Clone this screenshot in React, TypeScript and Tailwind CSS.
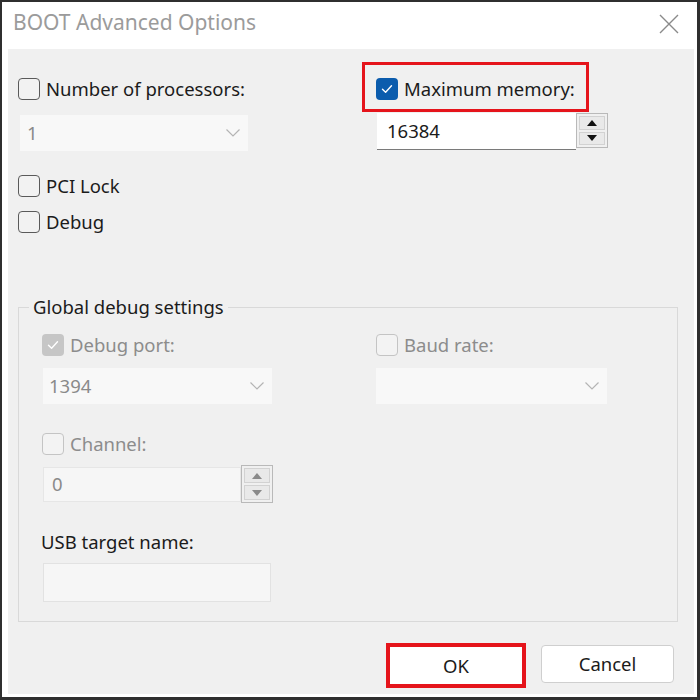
import React from 'react'

const font = { fontFamily: '"Noto Sans", "Open Sans", sans-serif' }

function Check({ checked = false, disabled = false }: { checked?: boolean; disabled?: boolean }) {
  if (checked) {
    return (
      <span
        className={
          'flex h-[22px] w-[22px] shrink-0 items-center justify-center rounded-[4px] ' +
          (disabled ? 'bg-[#c6c6c6]' : 'bg-[#0b5cad]')
        }
      >
        <svg width="14" height="14" viewBox="0 0 14 14" fill="none">
          <path d="M2.5 7.2 L5.6 10.2 L11.5 3.8" stroke="#fff" strokeWidth="1.4" strokeLinecap="round" strokeLinejoin="round" />
        </svg>
      </span>
    )
  }
  return (
    <span
      className={
        'block h-[22px] w-[22px] shrink-0 rounded-[4px] border-[1.5px] ' +
        (disabled ? 'border-[#c4c4c4] bg-[#f3f3f3]' : 'border-[#5a5a5a] bg-[#f2f2f2]')
      }
    />
  )
}

function CheckRow({ label, checked, disabled }: { label: string; checked?: boolean; disabled?: boolean }) {
  return (
    <div className="flex h-[22px] items-center gap-[6px]">
      <Check checked={checked} disabled={disabled} />
      <span className={'text-[18.5px] leading-none ' + (disabled ? 'text-[#8c8c8c]' : 'text-[#1b1b1b]')}>{label}</span>
    </div>
  )
}

function Chevron() {
  return (
    <svg width="16" height="10" viewBox="0 0 16 10" fill="none">
      <path d="M1.5 1.5 L8 8 L14.5 1.5" stroke="#b4b4b4" strokeWidth="1.2" />
    </svg>
  )
}

function Tri({ up, color }: { up?: boolean; color: string }) {
  return (
    <svg width="10" height="6" viewBox="0 0 10 6">
      <path d={up ? 'M0 6 L5 0 L10 6 Z' : 'M0 0 L10 0 L5 6 Z'} fill={color} />
    </svg>
  )
}

function Spinner({ disabled }: { disabled?: boolean }) {
  const c = disabled ? '#8a8a8a' : '#111'
  return (
    <div className="flex h-full w-[32px] flex-col gap-[2px] border border-[#b9b9b9] bg-[#f0f0f0] p-[2px]">
      <div className="flex flex-1 items-center justify-center border border-[#d2d2d2] bg-[#e9e9e9]">
        <Tri up color={c} />
      </div>
      <div className="flex flex-1 items-center justify-center border border-[#d2d2d2] bg-[#e9e9e9]">
        <Tri color={c} />
      </div>
    </div>
  )
}

export default function App() {
  return (
    <div style={font} className="h-[700px] w-[700px] border-2 border-r-[3px] border-b-[3px] border-[#2f2f2f] bg-white">
      {/* title bar */}
      <div className="flex h-[47px] items-center justify-between pb-[6px] pl-[11px] pr-[18px]">
        <span className="text-[21px] text-[#9b9b9b]">BOOT Advanced Options</span>
        <svg width="20" height="20" viewBox="0 0 20 20" fill="none" className="mt-[2px]">
          <path d="M1 1 L19 19 M19 1 L1 19" stroke="#8a8a8a" strokeWidth="1.4" />
        </svg>
      </div>

      <div className="ml-[6px] mr-[3px] h-[645px] bg-[#f0f0f0] pl-[10px] pt-[13px]">
        {/* top options */}
        <div className="grid grid-cols-[344px_1fr] items-start">
          <div className="pt-[16px]">
            <CheckRow label="Number of processors:" />
            <div className="ml-[2px] mt-[15px] flex h-[36px] w-[228px] items-center justify-between bg-[#f8f8f8] pl-[7px] pr-[7px]">
              <span className="text-[18.5px] text-[#8a8a8a]">1</span>
              <Chevron />
            </div>
            <div className="mt-[24px]">
              <CheckRow label="PCI Lock" />
            </div>
            <div className="mt-[14px]">
              <CheckRow label="Debug" />
            </div>
          </div>

          <div>
            <div className="h-[50px] w-[227px] border-[3px] border-[#e5141b] pl-[11px] pt-[13px]">
              <CheckRow label="Maximum memory:" checked />
            </div>
            <div className="ml-[15px] mt-[1px] flex h-[36px] items-start">
              <div className="flex h-[37px] w-[199px] items-center border-b border-[#7a7a7a] bg-white pl-[10px]">
                <span className="text-[18.5px] text-[#1b1b1b]">16384</span>
              </div>
              <div className="h-[35px]">
                <Spinner />
              </div>
            </div>
          </div>
        </div>

        {/* global debug settings */}
        <fieldset className="mt-[62px] h-[327px] w-[660px] border border-[#d9d9d9] pl-[10px]">
          <legend className="px-[4px] text-[18.5px] leading-[24px] text-[#1b1b1b]">Global debug settings</legend>
          <div className="grid grid-cols-[334px_1fr] pl-[13px] pt-[15px]">
            <div>
              <CheckRow label="Debug port:" checked disabled />
              <div className="ml-[1px] mt-[12px] flex h-[36px] w-[229px] items-center justify-between bg-[#f8f8f8] pl-[6px] pr-[7px]">
                <span className="text-[18.5px] text-[#8a8a8a]">1394</span>
                <Chevron />
              </div>
              <div className="mt-[29px]">
                <CheckRow label="Channel:" disabled />
              </div>
              <div className="ml-[1px] mt-[10px] flex h-[38px] items-center">
                <div className="flex h-[35px] w-[198px] items-center border border-[#e6e6e6] bg-[#f6f6f6] pl-[8px]">
                  <span className="text-[18.5px] text-[#8a8a8a]">0</span>
                </div>
                <div className="h-[38px]">
                  <Spinner disabled />
                </div>
              </div>
              <div className="-ml-[1px] mt-[27px] text-[18.5px] leading-[24px] text-[#1b1b1b]">USB target name:</div>
              <div className="ml-[1px] mt-[9px] h-[39px] w-[228px] border border-[#e2e2e2] bg-[#f6f6f6]" />
            </div>
            <div>
              <CheckRow label="Baud rate:" disabled />
              <div className="mt-[12px] flex h-[36px] w-[231px] items-center justify-end bg-[#f8f8f8] pr-[7px]">
                <Chevron />
              </div>
            </div>
          </div>
        </fieldset>

        {/* buttons */}
        <div className="mt-[21px] flex items-start justify-end gap-[15px] pr-[20px]">
          <div className="h-[45px] w-[140px] border-4 border-[#e5141b] bg-white">
            <button className="flex h-full w-full items-center justify-center text-[18.5px] text-[#1b1b1b]">OK</button>
          </div>
          <button className="mt-[2px] flex h-[38px] w-[133px] items-center justify-center rounded-[4px] border border-[#cfcfcf] bg-white text-[18.5px] text-[#1b1b1b]">
            Cancel
          </button>
        </div>
      </div>
    </div>
  )
}
